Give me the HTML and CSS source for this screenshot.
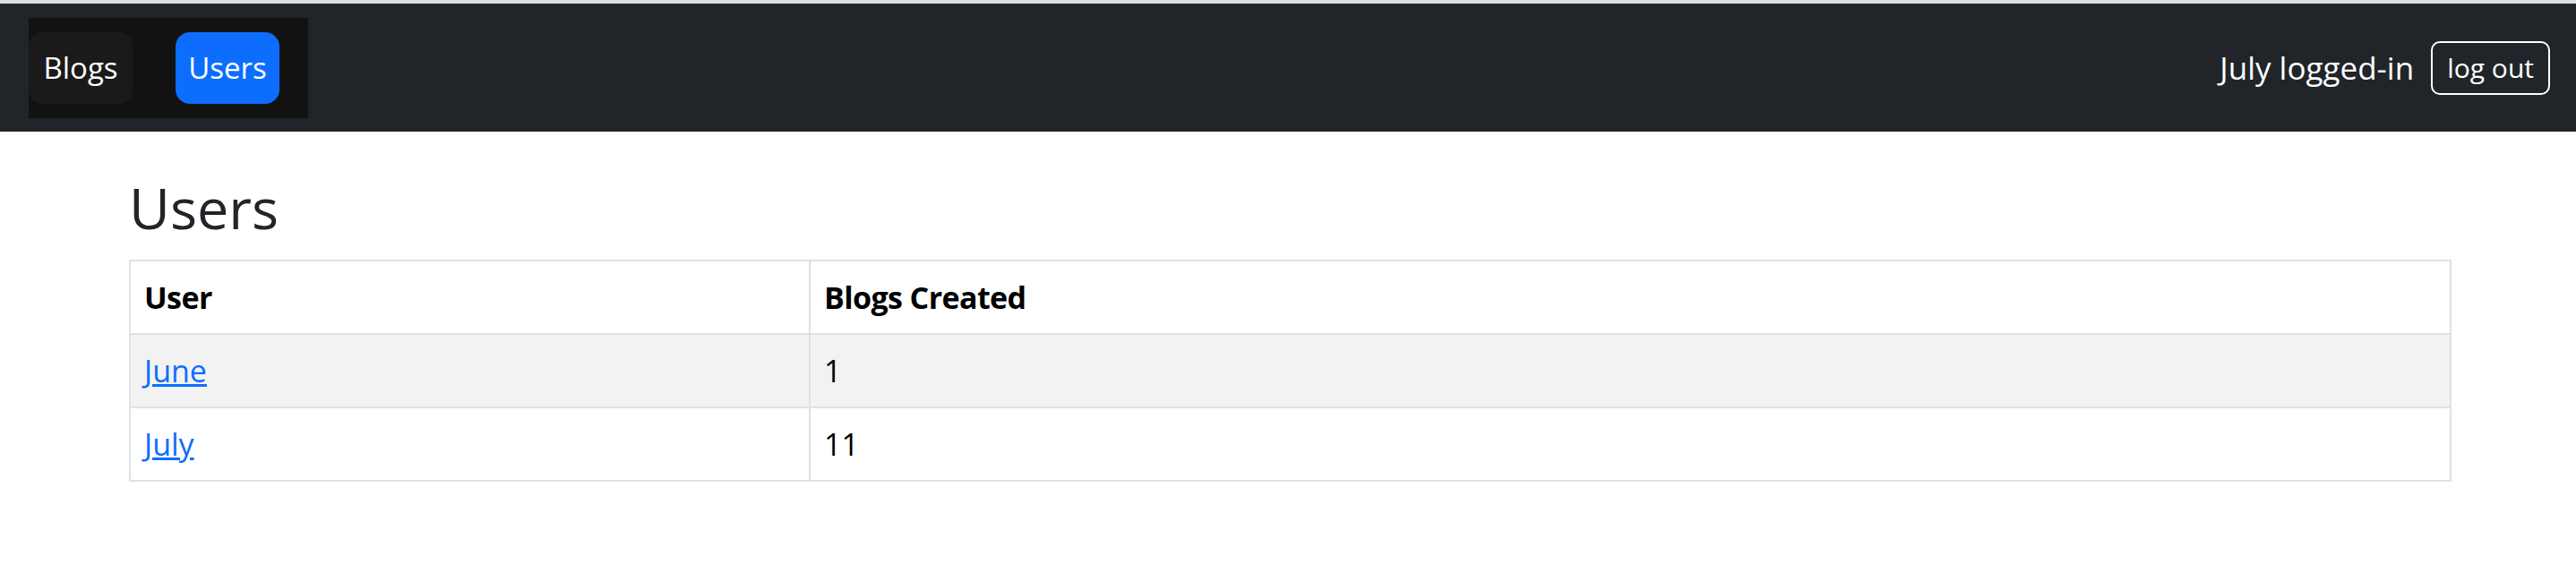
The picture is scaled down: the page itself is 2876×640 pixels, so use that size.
FILE: index.html
```html
<!DOCTYPE html>
<html lang="en">
<head>
<meta charset="utf-8">
<title>Users</title>
<link rel="stylesheet" href="styles.css">
</head>
<body>
<nav class="navbar">
  <div class="nav-links">
    <a class="nav-btn nav-btn-dark" href="#">Blogs</a>
    <a class="nav-btn nav-btn-active" href="#">Users</a>
  </div>
  <div class="nav-user">
    <span class="nav-user-text">July logged-in</span>
    <button class="logout-btn" type="button">log out</button>
  </div>
</nav>
<main class="container">
  <h1 class="page-title">Users</h1>
  <table class="users-table">
    <colgroup>
      <col class="col-user">
      <col class="col-count">
    </colgroup>
    <thead>
      <tr><th>User</th><th>Blogs Created</th></tr>
    </thead>
    <tbody>
      <tr class="row-striped"><td><a class="user-link" href="#">June</a></td><td>1</td></tr>
      <tr><td><a class="user-link" href="#">July</a></td><td>11</td></tr>
    </tbody>
  </table>
</main>
</body>
</html>
```

FILE: styles.css
```css
html, body {
  margin: 0;
  padding: 0;
}

body {
  background: #ffffff;
  border-top: 4px solid #dedede;
  font-family: "Open Sans", "Noto Sans", sans-serif;
  color: #212529;
}

.navbar {
  height: 143px;
  background: #212529;
  display: flex;
  align-items: center;
  justify-content: space-between;
  padding: 0 29px 0 32px;
}

.nav-links {
  display: flex;
  gap: 48px;
  background: #121212;
  padding: 16px 32px 16px 0;
}

.nav-btn {
  width: 116px;
  height: 80px;
  display: flex;
  align-items: center;
  justify-content: center;
  border-radius: 16px;
  color: #ffffff;
  text-decoration: none;
  font-size: 33px;
}

.nav-btn-dark {
  background: #1a1a1a;
}

.nav-btn-active {
  background: #0d6efd;
}

.nav-user {
  display: flex;
  align-items: center;
  gap: 19px;
  color: #ffffff;
}

.nav-user-text {
  font-size: 35px;
}

.logout-btn {
  height: 60px;
  padding: 0 16px;
  border: 2px solid #ffffff;
  border-radius: 10px;
  background: transparent;
  color: #ffffff;
  font-family: "Open Sans", "Noto Sans", sans-serif;
  font-size: 30px;
  line-height: 1;
}

.container {
  margin: 0 139px 0 144px;
}

.page-title {
  font-size: 63px;
  font-weight: 400;
  line-height: 1.2;
  margin: 47px 0 20px 0;
  color: #212529;
}

.users-table {
  width: 100%;
  table-layout: fixed;
  border-collapse: collapse;
  border: 2px solid #dee2e6;
  font-size: 34px;
  color: #000000;
}

.col-user {
  width: 759px;
}

.users-table th,
.users-table td {
  border: 2px solid #dee2e6;
  padding: 15px 15px;
  line-height: 50px;
  text-align: left;
}

.users-table th {
  font-weight: 700;
  letter-spacing: -0.6px;
}

.row-striped td {
  background: #f2f2f2;
}

.user-link {
  color: #0d6efd;
  text-decoration: underline;
}
```
